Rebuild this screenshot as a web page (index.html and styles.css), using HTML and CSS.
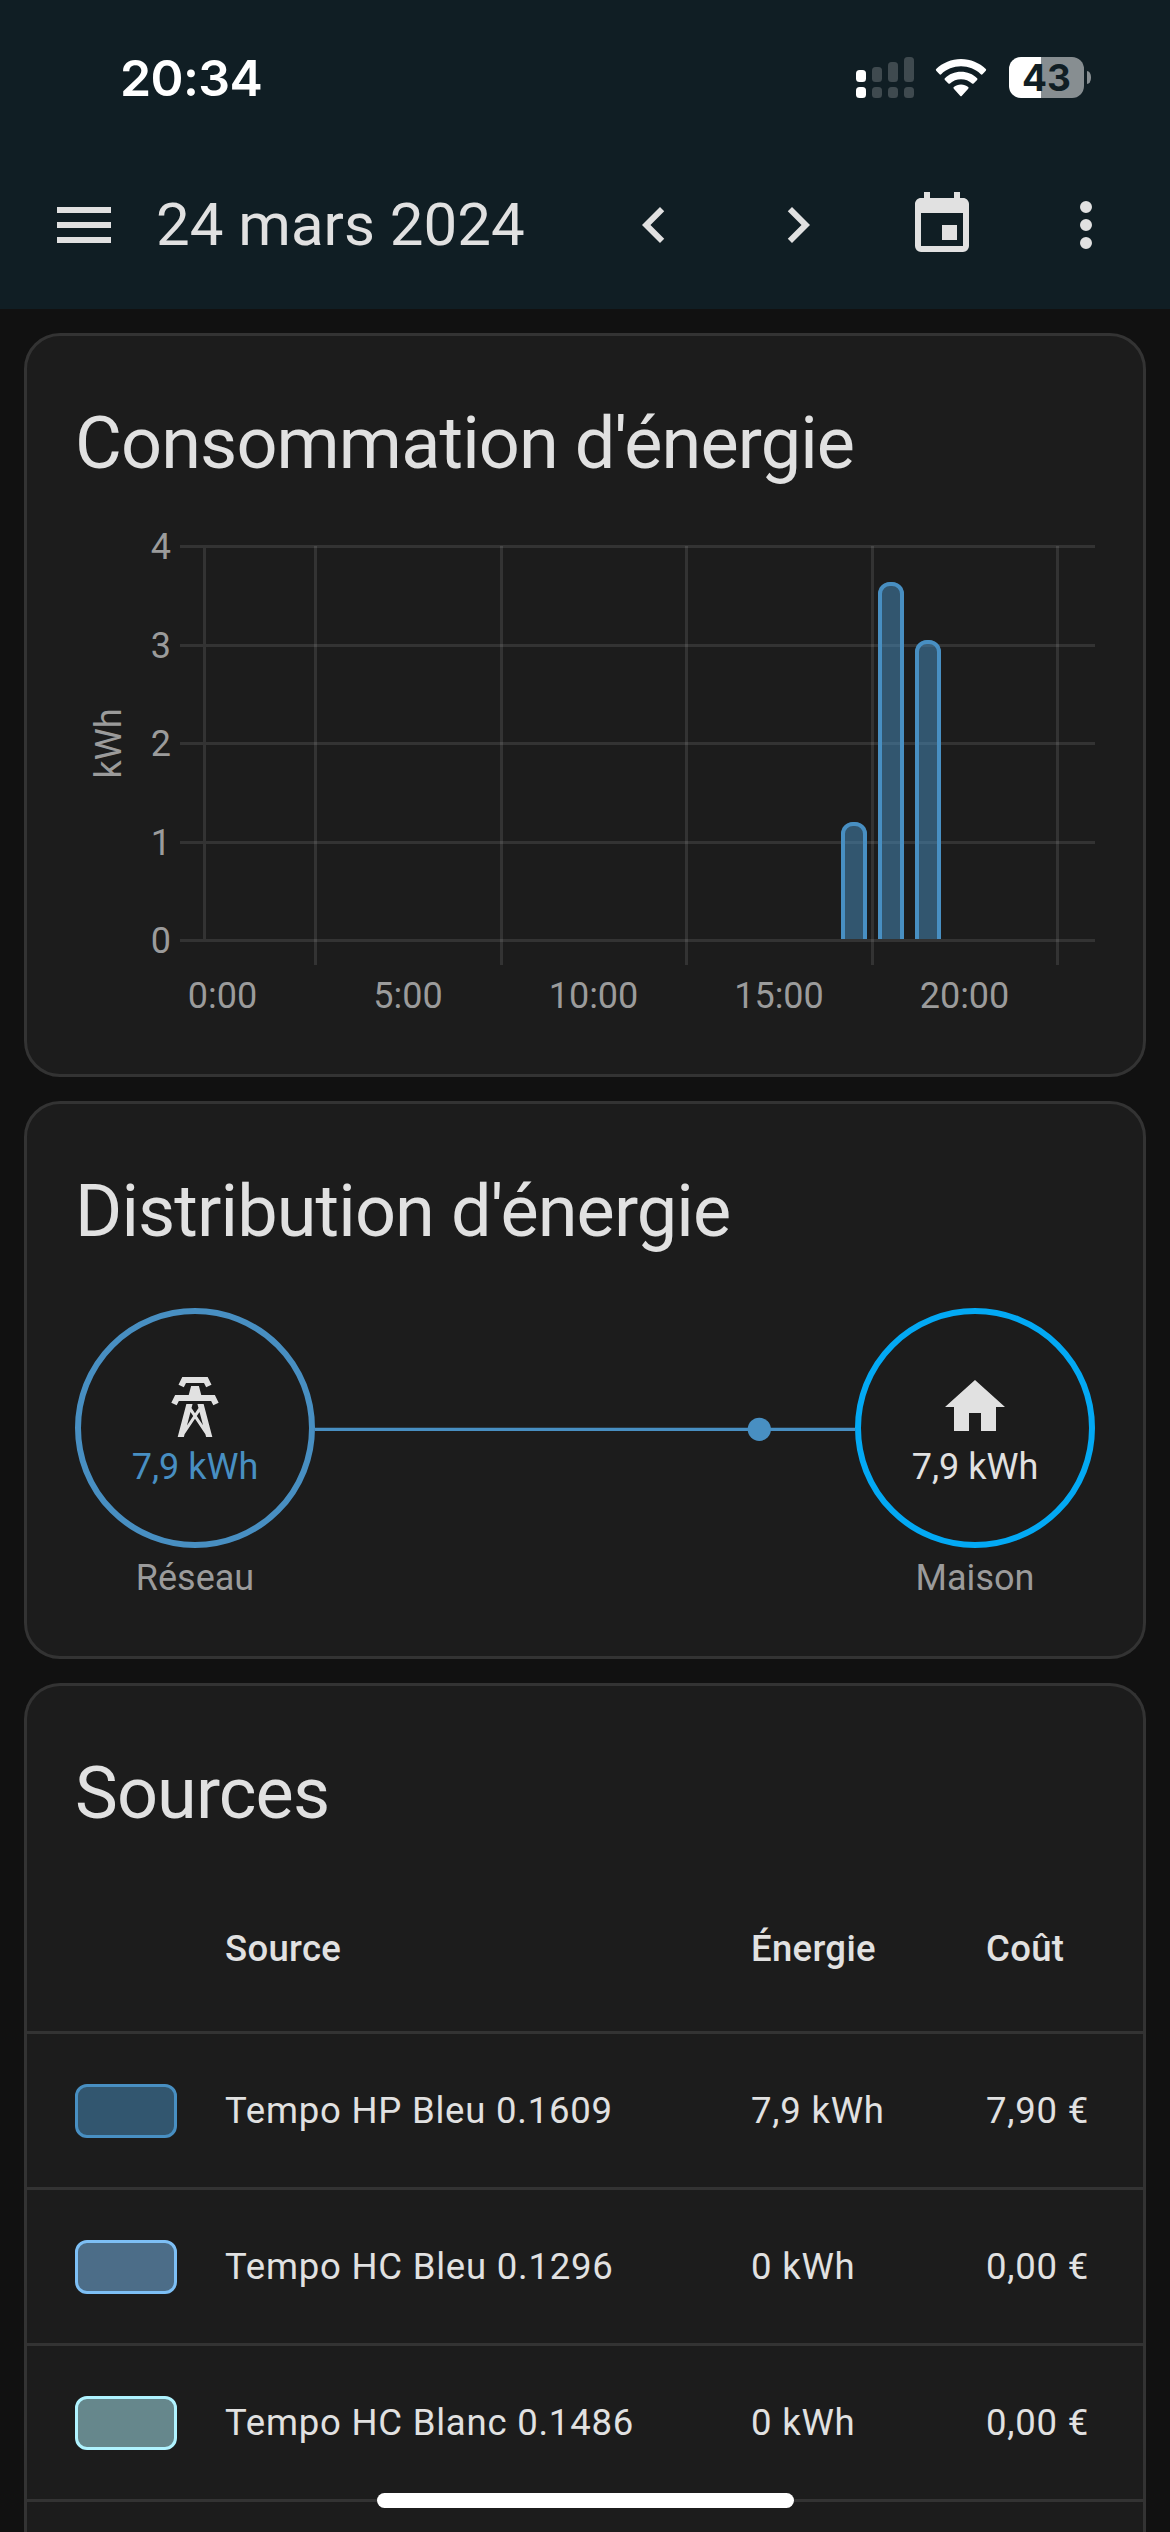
FILE: index.html
```html
<!DOCTYPE html>
<html lang="fr">
<head>
    <meta charset="UTF-8">
    <meta name="viewport" content="width=device-width, initial-scale=1.0">
    <title>Énergie</title>
    <link rel="stylesheet" href="styles.css">
</head>
<body>
    <header>
        <div class="status-bar">
            <span class="clock">20:34</span>
            <div class="status-icons">
                <svg class="signal" viewBox="0 0 58 41">
                    <g fill="#fff">
                        <rect x="0" y="13" width="10" height="12" rx="3.5"/>
                        <rect x="0" y="30" width="10" height="11" rx="3.5"/>
                    </g>
                    <g fill="#3f4a4f">
                        <rect x="16" y="10" width="10" height="15" rx="3.5"/>
                        <rect x="32" y="5" width="10" height="20" rx="3.5"/>
                        <rect x="48" y="0" width="10" height="25" rx="3.5"/>
                        <rect x="16" y="30" width="10" height="11" rx="3.5"/>
                        <rect x="32" y="30" width="10" height="11" rx="3.5"/>
                        <rect x="48" y="30" width="10" height="11" rx="3.5"/>
                    </g>
                </svg>
                <svg class="wifi" viewBox="0 0 52 38">
                    <path fill="#fff" d="M26 0C16.500 0 7.500 3.800 1.200 10.100a1.200 1.200 0 0 0 0 1.700L4.500 15.200a1.200 1.200 0 0 0 1.700 0C11.500 10.100 18.500 7.300 26 7.300s14.500 2.800 19.800 7.900a1.200 1.200 0 0 0 1.700 0l3.300-3.400a1.200 1.200 0 0 0 0-1.700C44.500 3.800 35.500 0 26 0Z"/>
                    <path fill="#fff" d="M26 12.800c-6.200 0-11.900 2.400-16.100 6.400a1.200 1.200 0 0 0 0 1.700l3.500 3.500a1.200 1.200 0 0 0 1.600 0C17.900 21.700 21.800 20.200 26 20.200s8.100 1.500 11 4.200a1.200 1.200 0 0 0 1.600 0l3.500-3.500a1.200 1.200 0 0 0 0-1.700C37.900 15.200 32.200 12.800 26 12.800Z"/>
                    <path fill="#fff" d="M26 25.500c-2.800 0-5.300 1-7.200 2.600a1.200 1.200 0 0 0 0 1.700l6.300 6.900a1.200 1.200 0 0 0 1.800 0l6.300-6.900a1.200 1.200 0 0 0 0-1.700C31.300 26.500 28.800 25.500 26 25.500Z"/>
                </svg>
                <div class="battery">
                    <span class="battery-level">43</span>
                    <span class="battery-cap"></span>
                </div>
            </div>
        </div>
        <div class="toolbar">
            <button class="icon-btn"><svg viewBox="0 0 24 24"><path d="M3,6H21V8H3V6M3,11H21V13H3V11M3,16H21V18H3V16Z"/></svg></button>
            <h1>24 mars 2024</h1>
            <button class="icon-btn"><svg viewBox="0 0 24 24"><path d="M15.41,16.58L10.83,12L15.41,7.41L14,6L8,12L14,18L15.41,16.58Z"/></svg></button>
            <button class="icon-btn"><svg viewBox="0 0 24 24"><path d="M8.59,16.58L13.17,12L8.59,7.41L10,6L16,12L10,18L8.59,16.58Z"/></svg></button>
            <button class="icon-btn"><svg viewBox="0 0 24 24"><path d="M19,19H5V8H19M16,1V3H8V1H6V3H5C3.89,3 3,3.89 3,5V19A2,2 0 0,0 5,21H19A2,2 0 0,0 21,19V5C21,3.89 20.1,3 19,3H18V1M17,12H12V17H17V12Z"/></svg></button>
            <button class="icon-btn"><svg viewBox="0 0 24 24"><path d="M12,16A2,2 0 0,1 14,18A2,2 0 0,1 12,20A2,2 0 0,1 10,18A2,2 0 0,1 12,16M12,10A2,2 0 0,1 14,12A2,2 0 0,1 12,14A2,2 0 0,1 10,12A2,2 0 0,1 12,10M12,4A2,2 0 0,1 14,6A2,2 0 0,1 12,8A2,2 0 0,1 10,6A2,2 0 0,1 12,4Z"/></svg></button>
        </div>
    </header>

    <main>
        <section class="card">
            <h2>Consommation d'énergie</h2>
            <svg class="chart" viewBox="75 516 1020 510">
                <!-- grid -->
                <g class="grid">
                    <path d="M180 546.5H1095M180 645.5H1095M180 743.500H1095M180 842.500H1095M180 940.500H1095M203 940.500H1095"/>
                    <path d="M315.500 546V965M501.500 546V965M686.500 546V965M872.500 546V965M1057.500 546V965"/>
                    <path d="M204.500 548V644M204.500 647V742M204.500 745V841M204.500 844V939"/>
                </g>
                <!-- hourly bars -->
                <g class="bar-fill">
                    <path d="M841 939V834A12 12 0 0 1 853 822H855A12 12 0 0 1 867 834V939Z"/>
                    <path d="M878 939V594A12 12 0 0 1 890 582H892A12 12 0 0 1 904 594V939Z"/>
                    <path d="M915 939V652A12 12 0 0 1 927 640H929A12 12 0 0 1 941 652V939Z"/>
                </g>
                <g class="bar-line">
                    <path d="M843 939V834A10 10 0 0 1 853 824H855A10 10 0 0 1 865 834V939"/>
                    <path d="M880 939V594A10 10 0 0 1 890 584H892A10 10 0 0 1 902 594V939"/>
                    <path d="M917 939V652A10 10 0 0 1 927 642H929A10 10 0 0 1 939 652V939"/>
                </g>
                <g class="y-labels">
                    <text x="171" y="559">4</text>
                    <text x="171" y="658">3</text>
                    <text x="171" y="756">2</text>
                    <text x="171" y="855">1</text>
                    <text x="171" y="953">0</text>
                </g>
                <g class="x-labels">
                    <text x="222.500" y="1008">0:00</text>
                    <text x="408" y="1008">5:00</text>
                    <text x="593.500" y="1008">10:00</text>
                    <text x="779" y="1008">15:00</text>
                    <text x="964.500" y="1008">20:00</text>
                    <text transform="translate(121 743.500) rotate(-90)">kWh</text>
                </g>
            </svg>
        </section>

        <section class="card">
            <h2>Distribution d'énergie</h2>
            <div class="flow">
                <div class="node grid-node">
                    <div class="circle">
                        <svg viewBox="0 0 24 24"><path d="M8.28,5.45L6.5,4.55L7.76,2H16.23L17.5,4.55L15.72,5.44L15,4H9L8.28,5.45M18.62,8H14.09L13.3,5H10.7L9.91,8H5.38L4.1,10.55L5.89,11.44L6.62,10H17.38L18.1,11.45L19.89,10.56L18.62,8M17.77,22H15.7L15.46,21.1L12,15.9L8.53,21.1L8.3,22H6.23L9.12,11H11.19L10.83,12.35L12,14.1L13.16,12.35L12.81,11H14.88L17.77,22M11.4,15L10.5,13.65L9.32,18.13L11.4,15M14.68,18.12L13.5,13.64L12.6,15L14.68,18.12Z"/></svg>
                        <span>7,9 kWh</span>
                    </div>
                    <p>Réseau</p>
                </div>
                <svg class="flow-line" viewBox="0 0 540 240">
                    <path d="M0 121.300H540" stroke="#488fc2" stroke-width="3.200"/>
                    <circle cx="444.300" cy="121.300" r="11.600" fill="#488fc2"/>
                </svg>
                <div class="node home-node">
                    <div class="circle">
                        <svg viewBox="0 0 24 24"><path d="M10,20V14H14V20H19V12H22L12,3L2,12H5V20H10Z"/></svg>
                        <span>7,9 kWh</span>
                    </div>
                    <p>Maison</p>
                </div>
            </div>
        </section>

        <section class="card sources">
            <h2>Sources</h2>
            <div class="row head">
                <span></span>
                <span>Source</span>
                <span>Énergie</span>
                <span>Coût</span>
            </div>
            <div class="row">
                <span class="swatch hp-bleu"></span>
                <span>Tempo HP Bleu 0.1609</span>
                <span>7,9 kWh</span>
                <span>7,90 €</span>
            </div>
            <div class="row">
                <span class="swatch hc-bleu"></span>
                <span>Tempo HC Bleu 0.1296</span>
                <span>0 kWh</span>
                <span>0,00 €</span>
            </div>
            <div class="row">
                <span class="swatch hc-blanc"></span>
                <span>Tempo HC Blanc 0.1486</span>
                <span>0 kWh</span>
                <span>0,00 €</span>
            </div>
            <div class="row"></div>
        </section>
    </main>

    <div class="home-indicator"></div>
</body>
</html>
```
FILE: styles.css
```css
* {
    box-sizing: border-box;
}
body {
    font-family: Roboto, sans-serif;
    background-color: #111111;
    color: #e1e1e1;
    margin: 0;
    height: 2532px;
    overflow: hidden;
    display: flex;
    flex-direction: column;
}
h1, h2, p {
    margin: 0;
    font-weight: 400;
}
svg {
    display: block;
}

/* Header */
header {
    background-color: #101e24;
    height: 309px;
    flex: none;
}
.status-bar {
    height: 141px;
    padding: 57px 79px 0 120px;
    display: flex;
    justify-content: space-between;
    align-items: flex-start;
    color: #fff;
    font-family: Inter, sans-serif;
}
.clock {
    font-size: 50px;
    font-weight: 600;
    line-height: 42px;
    letter-spacing: -0.6px;
}
.status-icons {
    display: flex;
    height: 41px;
}
.signal {
    width: 58px;
    height: 41px;
}
.wifi {
    width: 52px;
    height: 38px;
    margin: 2px 22px 0 21px;
}
.battery {
    display: flex;
    align-items: center;
    gap: 3px;
}
.battery-level {
    width: 75px;
    height: 41px;
    border-radius: 12px;
    background: linear-gradient(to right, #fff 32px, #878e91 32px);
    color: #101e24;
    font-size: 37px;
    font-weight: 650;
    line-height: 41px;
    text-align: center;
}
.battery-cap {
    width: 4px;
    height: 13px;
    border-radius: 0 4px 4px 0 / 0 6px 6px 0;
    background-color: #878e91;
}
.toolbar {
    height: 168px;
    padding: 0 12px;
    display: flex;
    align-items: center;
}
.toolbar h1 {
    flex: 1;
    font-size: 60px;
    line-height: 72px;
}
.icon-btn {
    width: 144px;
    height: 144px;
    padding: 36px;
    border: none;
    background: none;
}
.icon-btn svg {
    width: 72px;
    height: 72px;
    fill: #e1e1e1;
}

/* Cards */
main {
    flex: 1;
    padding: 24px 24px 0;
    display: flex;
    flex-direction: column;
    gap: 24px;
}
.card {
    background-color: #1c1c1c;
    border: 3px solid #333333;
    border-radius: 36px;
    padding: 36px 48px 48px;
}
.card h2 {
    font-size: 72px;
    line-height: 144px;
    letter-spacing: -0.012em;
    margin-bottom: 24px;
}

/* Chart */
.chart {
    width: 1020px;
    height: 510px;
    margin-top: -24px;
    font-size: 36px;
    fill: #9b9b9b;
}
.grid {
    stroke: rgba(225, 225, 225, 0.12);
    stroke-width: 3;
    fill: none;
}
.bar-fill {
    fill: rgba(72, 143, 194, 0.5);
}
.bar-line {
    stroke: #488fc2;
    stroke-width: 4;
    fill: none;
}
.y-labels {
    text-anchor: end;
}
.x-labels {
    text-anchor: middle;
}

/* Energy distribution */
.flow {
    display: flex;
    align-items: flex-start;
}
.node {
    width: 240px;
    text-align: center;
    font-size: 36px;
}
.node p {
    color: #9b9b9b;
    line-height: 60px;
}
.circle {
    width: 240px;
    height: 240px;
    padding-top: 57px;
    border: 6px solid #488fc2;
    border-radius: 50%;
    display: flex;
    flex-direction: column;
    align-items: center;
    line-height: 48px;
}
.circle svg {
    width: 72px;
    height: 72px;
    fill: #e1e1e1;
}
.grid-node span {
    color: #488fc2;
}
.home-node .circle {
    border-color: #03a9f4;
}
.flow-line {
    width: 540px;
    height: 240px;
}

/* Sources table */
.sources {
    flex: 1;
    min-height: 0;
    padding: 36px 0 0;
    border-bottom: none;
    border-radius: 36px 36px 0 0;
}
.sources h2 {
    padding: 0 48px;
    margin-bottom: 0;
}
.row {
    height: 156px;
    padding: 1px 0 0 48px;
    border-top: 3px solid #333333;
    display: grid;
    grid-template-columns: 150px 526px 235px 1fr;
    align-items: center;
    font-size: 36.5px;
    line-height: 44px;
    letter-spacing: 0.0215em;
    white-space: nowrap;
}
.row.head {
    height: 165px;
    border-top: none;
    font-weight: 500;
    letter-spacing: 0.009em;
}
.swatch {
    width: 102px;
    height: 54px;
    border: 3px solid;
    border-radius: 12px;
}
.hp-bleu {
    border-color: #488fc2;
    background-color: #32566f;
}
.hc-bleu {
    border-color: #7dbff5;
    background-color: #4c6d88;
}
.hc-blanc {
    border-color: #b0f3ff;
    background-color: #66878c;
}

.home-indicator {
    position: fixed;
    left: 377px;
    bottom: 24px;
    width: 417px;
    height: 15px;
    border-radius: 8px;
    background-color: #fff;
}
```
